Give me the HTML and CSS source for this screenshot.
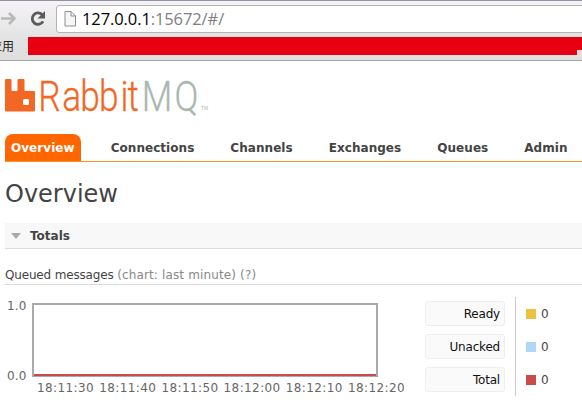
FILE: index.html
```html
<!DOCTYPE html>
<html lang="en">
<head>
<meta charset="utf-8">
<title>RabbitMQ Management</title>
<link rel="stylesheet" href="styles.css">
</head>
<body>
<div class="browser">
  <div class="toolbar">
    <svg class="nav-icons" width="56" height="32" viewBox="0 0 56 32">
      <path d="M1 17.500H14M9 12l5.500 5.500L9 23" fill="none" stroke="#b9b9b9" stroke-width="2.600"/>
      <path d="M42.500 14.200A5.700 5.700 0 1 0 43 20.300" fill="none" stroke="#5a5a5a" stroke-width="2.800"/>
      <path d="M45 10v7.500h-7.500z" fill="#5a5a5a"/>
    </svg>
    <div class="omnibox">
      <svg width="12" height="16" viewBox="0 0 12 16"><path d="M1 .5h6l4.500 4.500v10H1z M7 .5V5h4.500" fill="#f6f6f6" stroke="#8d8d8d"/></svg>
      <div class="url">127.0.0.1<span>:15672/#/</span></div>
    </div>
  </div>
  <div class="bookmarks"><span class="apps">应用</span><div class="strip"><i></i></div></div>
</div>
<main>
  <svg class="logo" width="206" height="38" viewBox="0 0 206 38">
    <path d="M1 3h4.500q1 0 1 1v10q0 1 1 1h4q1 0 1-1V4q0-1 1-1h5q1 0 1 1v10q0 1 1 1h8.500q1 0 1 1v18.500q0 1-1 1H1q-1 0-1-1V4q0-1 1-1z" fill="#f26724"/>
    <rect x="18" y="23" width="6" height="6" rx="1.500" fill="#fff"/>
    <g transform="scale(.82 1)">
      <text class="word" y="34.800" x="40.500 69.900 91.800 114.600 140.900 149.500" fill="#f26724" stroke="#f26724">Rabbit</text>
      <text class="word" y="34.800" x="166.800 206.700" fill="#a9b7b1" stroke="#a9b7b1">MQ</text>
    </g>
    <text class="tm" x="196" y="34" textLength="7" lengthAdjust="spacingAndGlyphs" fill="#a9b7b1">TM</text>
  </svg>
  <nav class="tabs">
    <a class="active">Overview</a><a>Connections</a><a>Channels</a><a>Exchanges</a><a>Queues</a><a>Admin</a>
  </nav>
  <h1>Overview</h1>
  <h2><i class="arrow"></i>Totals</h2>
  <h3>Queued messages <span>(chart: last minute) (?)</span></h3>
  <div class="stats">
    <div class="chart">
      <div class="y-axis"><span>1.0</span><span>0.0</span></div>
      <div class="plot"></div>
      <div class="x-axis"><span>18:11:30</span><span>18:11:40</span><span>18:11:50</span><span>18:12:00</span><span>18:12:10</span><span>18:12:20</span></div>
    </div>
    <div class="labels"><span>Ready</span><span>Unacked</span><span>Total</span></div>
    <div class="values">
      <span><i class="ready"></i>0</span><span><i class="unacked"></i>0</span><span><i class="total"></i>0</span>
    </div>
  </div>
</main>
</body>
</html>
```
FILE: styles.css
```css
* { box-sizing: border-box; }
body { margin: 0; background: #fff; color: #444; font: 12px/16px "DejaVu Sans", sans-serif; width: 582px; height: 402px; overflow: hidden; white-space: nowrap; }
.browser { height: 61px; background: linear-gradient(#f6f3f8, #e4e4e4 35px, #dedede); border-top: 1px solid #92929c; border-bottom: 1px solid #a4a4a4; }
.toolbar { display: flex; height: 36px; }
.nav-icons { flex: none; }
.omnibox { display: flex; align-items: center; width: 540px; flex: none; height: 28px; margin-top: 4px; padding-left: 7px; background: #fff; border: 1px solid #b4b4b4; border-radius: 3px; }
.url { margin-left: 6px; font: 16.5px/26px "Open Sans", sans-serif; letter-spacing: -.1px; color: #000; }
.url span { color: #808080; }
.bookmarks { display: flex; height: 18px; }
.apps { width: 28px; margin-left: -10px; flex: none; font: 12px/17px "Noto Sans CJK SC", sans-serif; color: #222; }
.strip { flex: none; width: 564px; margin-left: 10px; background: #e60012; display: flex; align-items: flex-end; }
.strip i { width: 20px; height: 5px; margin-left: 549px; background: #dedede; }
main { padding-left: 5px; }
.logo { display: block; margin-top: 15px; overflow: visible; }
.word { font: 43px Roboto, sans-serif; font-weight: 300; stroke-width: .3px; }
.tm { font: 6px "Liberation Sans", sans-serif; }
.tabs { display: flex; margin-top: 20px; height: 28px; border-bottom: 1px solid #f7931e; font-weight: bold; font-size: 12px; letter-spacing: .05px; }
.tabs a { padding: 6px 6px 0; margin-right: 24px; height: 27px; }
.tabs .active { background: #f60; color: #fff; border-radius: 8px 8px 0 0; }
h1 { margin: 15px 0 0; font-size: 24px; line-height: 34px; font-weight: normal; }
h2 { display: flex; align-items: center; margin: 12px 0 0; height: 26px; padding-left: 6px; background: #f8f8f8; border-bottom: 1px solid #ddd; font-size: 12px; }
.arrow { border: 5.5px solid transparent; border-top: 6px solid #aaa; border-bottom: 0; margin-right: 9px; }
h3 { margin: 17px 0 0; height: 19px; border-bottom: 1px solid #ddd; font-size: 12px; font-weight: normal; line-height: 18px; letter-spacing: -.17px; }
h3 span { color: #888; letter-spacing: .14px; }
.stats { display: flex; margin-top: 12px; }
.chart { display: grid; grid-template-columns: 27px 346px; grid-template-rows: 74px 20px; width: 420px; margin-top: 6px; color: #666; }
.y-axis { display: flex; flex-direction: column; justify-content: space-between; margin: -5px 0 -7px; letter-spacing: .2px; padding-left: 2px; }
.plot { border: 2px solid #aaa; border-bottom-width: 1px; box-shadow: inset 0 -2px #cb4b4b; }
.x-axis { grid-column: 2; display: flex; gap: 5px; margin: 3px 0 0 5px; letter-spacing: .4px; }
.x-axis span { width: 57.200px; flex: none; }
.labels { width: 80px; display: flex; flex-direction: column; gap: 8px; padding-top: 4px; color: #111; letter-spacing: -.2px; }
.labels span { height: 25px; line-height: 24px; text-align: right; padding-right: 4px; background: #fafafa; border: 1px solid #eee; border-radius: 3px; }
.values { margin-left: 10px; border-left: 1px solid #ccc; padding: 4px 0 0 10px; height: 99px; display: flex; flex-direction: column; gap: 8px; }
.values span { display: flex; align-items: center; height: 25px; }
.values i { width: 10px; height: 10px; margin-right: 5px; }
.ready { background: #edc240; }
.unacked { background: #afd8f8; }
.total { background: #cb4b4b; }
```
